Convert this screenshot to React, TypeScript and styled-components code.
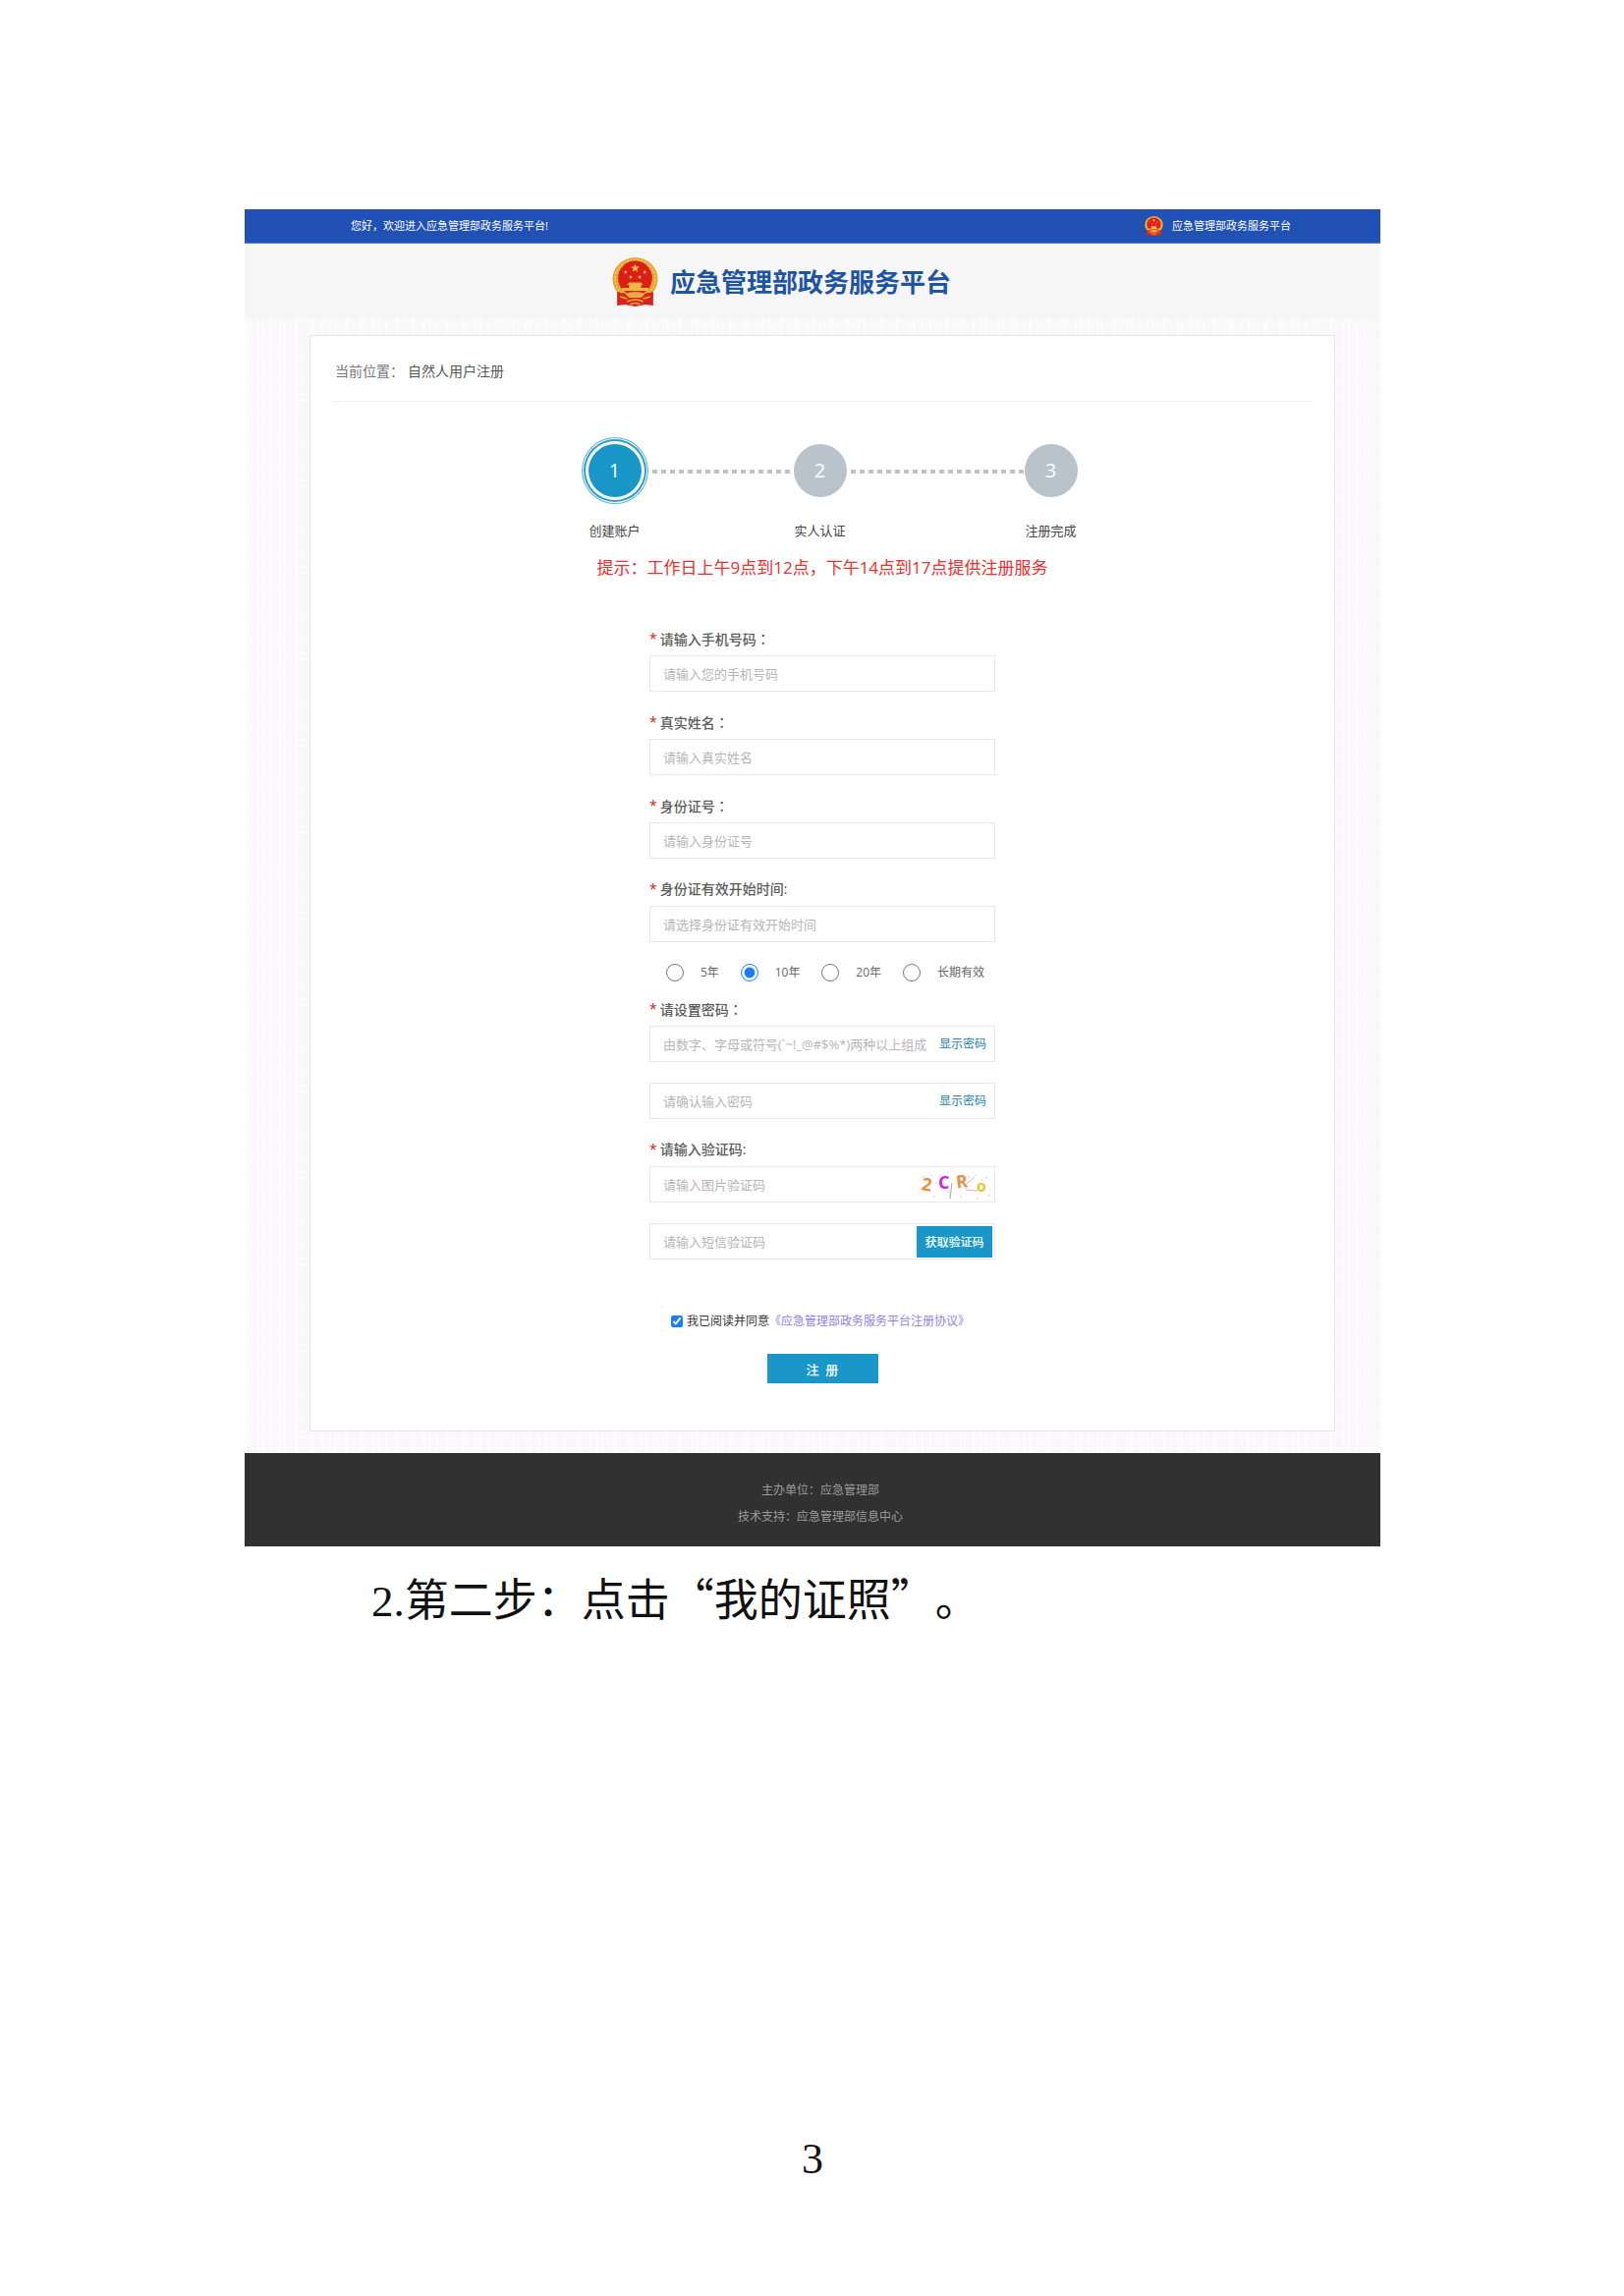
import React, { useState } from "react";
import styled, { createGlobalStyle } from "styled-components";

const sans = '"Open Sans", "Noto Sans CJK SC", sans-serif';

const GlobalStyle = createGlobalStyle`
  *, *::before, *::after { box-sizing: border-box; }
  body { margin: 0; background: #fff; font-family: ${sans}; color: #555; }
  button, input { font-family: inherit; }
`;

const Paper = styled.main`
  padding: 213px 248px 112px 249px;
`;

const TopBar = styled.div`
  display: flex;
  align-items: center;
  justify-content: space-between;
  height: 35px;
  padding: 0 91px 0 108px;
  background: #2151b5;
  border-bottom: 1px solid #5c7fc8;
  color: #fff;
  font-size: 11px;
  line-height: 20px;
`;

const PortalLink = styled.a`
  display: flex;
  align-items: center;
  gap: 9px;
  color: inherit;
  text-decoration: none;
`;

const Header = styled.header`
  display: flex;
  align-items: center;
  gap: 12px;
  height: 76px;
  padding: 1px 0 0 374px;
  background: #f7f6f7;
`;

const SiteTitle = styled.h1`
  margin: 0;
  color: #1d54a6;
  font-size: 26px;
  line-height: 36px;
  font-weight: 700;
`;

const Backdrop = styled.div`
  padding: 17px 46px 22px 66px;
  background-color: #f9f7f9;
  background-image:
    repeating-linear-gradient(90deg, rgba(255, 251, 255, 0.8) 0 2px, transparent 2px 5px, rgba(255, 251, 255, 0.7) 5px 6px, transparent 6px 13px),
    repeating-linear-gradient(90deg, rgba(255, 252, 255, 0.7) 0 3px, transparent 3px 17px),
    repeating-linear-gradient(0deg, rgba(255, 252, 255, 0.6) 0 1px, transparent 1px 4px, rgba(255, 252, 255, 0.4) 4px 5px, transparent 5px 11px);
`;

const Card = styled.section`
  padding: 0 22px 48px;
  background: #fff;
  border: 1px solid #e6e6e6;
`;

const Breadcrumb = styled.nav`
  display: flex;
  align-items: center;
  gap: 4px;
  height: 67px;
  padding: 6px 3px 0;
  border-bottom: 1px solid #f2f1f2;
  font-size: 14px;
  line-height: 20px;
  color: #777;
`;

const Current = styled.span`
  color: #555;
`;

const Steps = styled.ol`
  display: flex;
  justify-content: center;
  margin: 36px 0 0;
  padding: 0 0 0 14px;
  list-style: none;
`;

const Step = styled.li<{ $active?: boolean }>`
  display: flex;
  flex-direction: column;
  align-items: center;
  gap: 17px;
  width: ${(p) => (p.$active ? 68 : 54)}px;
  color: #444;
  font-size: 13px;
  line-height: 20px;
  white-space: nowrap;
`;

const Marker = styled.div`
  display: grid;
  place-items: center;
  height: 68px;
`;

const Dot = styled.span<{ $active?: boolean }>`
  display: grid;
  place-items: center;
  width: 54px;
  height: 54px;
  border-radius: 50%;
  background: ${(p) => (p.$active ? "#1897c8" : "#b8c3cc")};
  box-shadow: ${(p) =>
    p.$active
      ? "0 0 0 3px #fff, 0 0 0 5px #2a9dca, 0 0 0 6px #fff, 0 0 0 7px #58b2d6"
      : "none"};
  color: #fff;
  font-size: 20px;
  line-height: 28px;
`;

const Dashes = styled.li<{ $width: number }>`
  width: ${(p) => p.$width}px;
  height: 4px;
  margin-top: 33px;
  background: repeating-linear-gradient(90deg, transparent 0 4px, #bdc2c9 4px 9px);
`;

const Notice = styled.p`
  margin: 16px 0 0;
  color: #e8302f;
  font-size: 17px;
  line-height: 24px;
  text-align: center;
`;

const Form = styled.form`
  width: 352px;
  max-width: 100%;
  margin: 50px auto 0;
`;

const Field = styled.div`
  margin-bottom: 21px;
`;

const Label = styled.label`
  display: flex;
  gap: 3px;
  height: 20px;
  margin-bottom: 7px;
  color: #5c5c5c;
  font-size: 14px;
  line-height: 20px;
  font-weight: 500;
`;

const Required = styled.span`
  color: #d02020;
`;

const WideColon = styled.span`
  font-family: "Noto Sans CJK TC", sans-serif;
`;

const Box = styled.div`
  display: flex;
  align-items: center;
  height: 37px;
  padding: 0 2px 0 13px;
  border: 1px solid #ece6ea;
  background: #fff;
`;

const TextInput = styled.input`
  flex: 1;
  min-width: 0;
  height: 30px;
  padding: 0;
  border: 0;
  outline: 0;
  background: transparent;
  color: #444;
  font-size: 13px;
  &::placeholder { color: #b9b4b8; opacity: 1; }
`;

const Reveal = styled.button`
  margin-right: 6px;
  padding: 0;
  border: 0;
  background: none;
  color: #2586a4;
  font-size: 12px;
  line-height: 20px;
  cursor: pointer;
`;

const CaptchaButton = styled.button`
  display: flex;
  padding: 0;
  border: 0;
  background: none;
  cursor: pointer;
`;

const CodeButton = styled.button`
  width: 77px;
  height: 32px;
  padding: 0;
  border: 0;
  background: #1897c8;
  color: #fff;
  font-size: 12px;
  font-weight: 500;
  cursor: pointer;
`;

const Terms = styled.div`
  display: flex;
  justify-content: space-between;
  margin: 0 11px 17px 17px;
`;

const Term = styled.label`
  display: flex;
  align-items: center;
  gap: 17px;
  color: #666;
  font-size: 12px;
  line-height: 20px;
`;

const Radio = styled.input`
  width: 18px;
  height: 18px;
  margin: 0;
  accent-color: #1a7cff;
`;

const Agreement = styled.div`
  display: flex;
  align-items: center;
  justify-content: center;
  margin: 53px 4px 23px 0;
  color: #333;
  font-size: 12px;
  line-height: 20px;
`;

const AgreeLabel = styled.label`
  display: flex;
  align-items: center;
  gap: 4px;
`;

const Checkbox = styled.input`
  width: 12px;
  height: 12px;
  margin: 0;
  accent-color: #1a7cff;
`;

const TermsLink = styled.a`
  color: #8d83e8;
  text-decoration: none;
`;

const Submit = styled.button`
  display: block;
  width: 113px;
  height: 30px;
  margin: 0 auto;
  padding: 0;
  border: 0;
  background: #1897c8;
  color: #fff;
  font-size: 13px;
  font-weight: 500;
  white-space: pre;
  cursor: pointer;
`;

const Footer = styled.footer`
  padding: 24px 0 17px 16px;
  background: #313131;
  color: #9c9c9c;
  font-size: 12px;
  line-height: 27px;
  text-align: center;
`;

const FooterLine = styled.p`
  margin: 0;
`;

const Instruction = styled.h2`
  margin: 20px 0 0 129px;
  color: #111;
  font-family: "Liberation Serif", "Noto Sans CJK SC", serif;
  font-size: 45px;
  line-height: 64px;
  font-weight: 400;
`;

const Chinese = styled.span`
  font-family: "KaiTi", "FangSong", "Noto Sans CJK SC", serif;
  text-spacing-trim: space-all;
`;

const PageNumber = styled.p`
  margin: 504px 0 0;
  color: #111;
  font-family: "Liberation Serif", serif;
  font-size: 44px;
  line-height: 64px;
  text-align: center;
`;

function Star({ x, y, r }: { x: number; y: number; r: number }) {
  const points = Array.from({ length: 10 }, (_, i) => {
    const a = (Math.PI / 5) * i - Math.PI / 2;
    const d = i % 2 ? r * 0.4 : r;
    return `${x + d * Math.cos(a)},${y + d * Math.sin(a)}`;
  }).join(" ");
  return <polygon points={points} fill="#f8cf4a" />;
}

function Emblem({ width, height }: { width: number; height: number }) {
  return (
    <svg width={width} height={height} viewBox="0 0 46 50" preserveAspectRatio="none" aria-hidden="true">
      <ellipse cx="23" cy="22" rx="22.5" ry="22" fill="#e0a637" />
      <ellipse cx="23" cy="22" rx="20" ry="19.5" fill="none" stroke="#f3cf69" strokeWidth="1.5" strokeDasharray="2 1.5" />
      <ellipse cx="23" cy="21" rx="17" ry="17.5" fill="#dc1d18" />
      <Star x={23} y={11} r={4.5} />
      <Star x={13.5} y={15} r={2.2} />
      <Star x={32.5} y={15} r={2.2} />
      <Star x={18.5} y={20} r={2.2} />
      <Star x={27.5} y={20} r={2.2} />
      <path d="M15 28 L17 25.5 H29 L31 28 Z M17 28 H29 V31 H17 Z M10 31 H36 V34 H10 Z" fill="#f0b944" />
      <path d="M5 35 Q14 38 23 36 Q32 38 41 35 L41 49 L33 48 L23 50 L13 48 L5 49 Z" fill="#d8241c" />
      <path d="M13 37 Q23 33 33 37 L29 41 H17 Z" fill="#e8b040" />
      <path d="M8 40 L15 42 M38 40 L31 42 M15 45 Q23 41 31 45 M18 48 Q23 45 28 48" fill="none" stroke="#e8a838" strokeWidth="1.5" />
    </svg>
  );
}

function Captcha() {
  const specks = [[3, 25], [7, 9], [15, 7], [18, 29], [29, 8], [33, 24], [45, 29], [53, 9], [60, 7], [66, 12], [62, 31], [71, 10], [75, 22], [74, 28], [50, 20], [20, 15]];
  return (
    <svg width="77" height="33" viewBox="0 0 77 33" role="img" aria-label="2CRo">
      {specks.map(([x, y], i) => (
        <circle key={i} cx={x} cy={y} r="0.8" fill={i % 2 ? "#cdb7df" : "#e3c7cf"} />
      ))}
      <g fontFamily='"Open Sans", sans-serif' fontWeight="700">
        <text x="5" y="23" fontSize="18" fill="#ea8c3a" transform="rotate(10 10 18)">2</text>
        <text x="22" y="21" fontSize="18" fill="#cf20ee">C</text>
        <text x="40" y="20" fontSize="18" fill="#e2914f" transform="rotate(-6 46 14)">R</text>
        <text x="61" y="24" fontSize="16" fill="#e3c832">o</text>
      </g>
      <path d="M36 15 L34 31" stroke="#b9a0a0" fill="none" />
      <path d="M51 16 L59 9 M50 22 L62 23" stroke="#e5a6c4" fill="none" />
    </svg>
  );
}

function FieldLabel({ htmlFor, text, wide }: { htmlFor: string; text: string; wide?: boolean }) {
  return (
    <Label htmlFor={htmlFor}>
      <Required>*</Required>
      <span>
        {text}
        {wide ? <WideColon lang="zh-TW">：</WideColon> : ":"}
      </span>
    </Label>
  );
}

function PasswordBox({ id, placeholder, label }: { id: string; placeholder: string; label?: string }) {
  const [shown, setShown] = useState(false);
  return (
    <Box>
      <TextInput id={id} type={shown ? "text" : "password"} placeholder={placeholder} aria-label={label} />
      <Reveal type="button" onClick={() => setShown(!shown)}>显示密码</Reveal>
    </Box>
  );
}

const basicFields = [
  { id: "phone", text: "请输入手机号码", placeholder: "请输入您的手机号码", wide: true },
  { id: "name", text: "真实姓名", placeholder: "请输入真实姓名", wide: true },
  { id: "idcard", text: "身份证号", placeholder: "请输入身份证号", wide: true },
  { id: "start", text: "身份证有效开始时间", placeholder: "请选择身份证有效开始时间", wide: false },
];

export default function App() {
  return (
    <>
      <GlobalStyle />
      <Paper lang="zh-CN">
        <TopBar>
          <span>您好，欢迎进入应急管理部政务服务平台!</span>
          <PortalLink href="#">
            <Emblem width={19} height={20} />
            应急管理部政务服务平台
          </PortalLink>
        </TopBar>
        <Header>
          <Emblem width={47} height={50} />
          <SiteTitle>应急管理部政务服务平台</SiteTitle>
        </Header>
        <Backdrop>
          <Card>
            <Breadcrumb>
              <span>当前位置：</span>
              <Current>自然人用户注册</Current>
            </Breadcrumb>
            <Steps>
              <Step $active>
                <Marker><Dot $active>1</Dot></Marker>
                创建账户
              </Step>
              <Dashes $width={148} aria-hidden="true" />
              <Step>
                <Marker><Dot>2</Dot></Marker>
                实人认证
              </Step>
              <Dashes $width={181} aria-hidden="true" />
              <Step>
                <Marker><Dot>3</Dot></Marker>
                注册完成
              </Step>
            </Steps>
            <Notice>提示：工作日上午9点到12点，下午14点到17点提供注册服务</Notice>
            <Form onSubmit={(e) => e.preventDefault()}>
              {basicFields.map((f) => (
                <Field key={f.id}>
                  <FieldLabel htmlFor={f.id} text={f.text} wide={f.wide} />
                  <Box><TextInput id={f.id} placeholder={f.placeholder} /></Box>
                </Field>
              ))}
              <Terms>
                {["5年", "10年", "20年", "长期有效"].map((t) => (
                  <Term key={t}>
                    <Radio type="radio" name="term" defaultChecked={t === "10年"} />
                    {t}
                  </Term>
                ))}
              </Terms>
              <Field>
                <FieldLabel htmlFor="password" text="请设置密码" wide />
                <PasswordBox id="password" placeholder="由数字、字母或符号(`~!_@#$%*)两种以上组成" />
              </Field>
              <Field>
                <PasswordBox id="confirm" placeholder="请确认输入密码" label="确认密码" />
              </Field>
              <Field>
                <FieldLabel htmlFor="captcha" text="请输入验证码" />
                <Box>
                  <TextInput id="captcha" placeholder="请输入图片验证码" />
                  <CaptchaButton type="button"><Captcha /></CaptchaButton>
                </Box>
              </Field>
              <Box>
                <TextInput aria-label="短信验证码" placeholder="请输入短信验证码" />
                <CodeButton type="button">获取验证码</CodeButton>
              </Box>
              <Agreement>
                <AgreeLabel>
                  <Checkbox type="checkbox" defaultChecked />
                  我已阅读并同意
                </AgreeLabel>
                <TermsLink href="#">《应急管理部政务服务平台注册协议》</TermsLink>
              </Agreement>
              <Submit type="submit">{"注  册"}</Submit>
            </Form>
          </Card>
        </Backdrop>
        <Footer>
          <FooterLine>主办单位：应急管理部</FooterLine>
          <FooterLine>技术支持：应急管理部信息中心</FooterLine>
        </Footer>
        <Instruction>
          2.<Chinese>第二步：点击“我的证照”。</Chinese>
        </Instruction>
        <PageNumber>3</PageNumber>
      </Paper>
    </>
  );
}
